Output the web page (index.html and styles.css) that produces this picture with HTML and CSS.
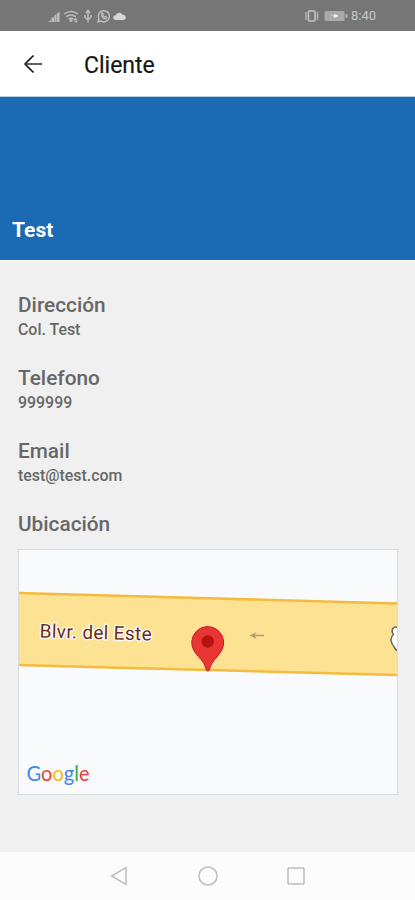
FILE: index.html
```html
<!DOCTYPE html>
<html lang="es">
<head>
<meta charset="utf-8">
<title>Cliente</title>
<link rel="stylesheet" href="styles.css">
</head>
<body>
<div class="screen">
  <div class="status">
    <svg class="status-icons" width="82" height="16" viewBox="0 0 82 16">
      <g fill="#bdbdbd">
        <path d="M1 14l3-2v2zM4.500 14v-4l2.500-1v5zM7.500 14V7.500l2-1.500v8zM10 14V5.500l2.500-2V14z"/>
        <path d="M77 12h-8.500a2.400 2.400 0 0 1 .2-4.800 3.900 3.900 0 0 1 7-.4 2.700 2.700 0 0 1 1.300 5.200z" fill="#d8d8d8"/>
        <circle cx="24" cy="12.500" r="1.600"/>
        <path d="M28.500 9.500l2.200 2.700h-4.400zM29 15l-2-2.200h4z"/>
      </g>
      <g fill="none" stroke="#bdbdbd" stroke-width="1.500">
        <path d="M17 6q7-5 14 0M19 8.700q5-3.400 10 0M21.500 11q2.500-1.600 5 0"/>
        <path d="M41 2.500v12M39 5l2-2.500L43 5M38 7v2.500l3 2.500 3-3V7"/>
        <path d="M51 14l.9-3.200a5.600 5.600 0 1 1 2.200 2.300z"/>
        <path d="M54.500 5.500c-.3 3 2 5.500 4.800 5.300l.6-1.500-1.700-.8-.8.7-1.700-1.800.6-.8-.7-1.500z" stroke-width="1.200"/>
      </g>
    </svg>
    <div class="status-right">
      <svg width="45" height="14" viewBox="0 0 45 14">
        <rect x="4.500" y="2" width="6.500" height="10" rx="1" fill="none" stroke="#c8c8c8" stroke-width="1.500"/>
        <path d="M2 3v8M13.500 3v8" stroke="#bababa" stroke-width="1.300"/>
        <rect x="20.500" y="2" width="20" height="10" rx="1.500" fill="#a9a9a9"/>
        <rect x="41.500" y="5" width="2" height="4" fill="#b0b0b0"/>
        <path d="M26 6.200l4 .2V4.800l5 2.200-5 2V7.600z" fill="#eee"/>
      </svg>
      <span class="clock">8:40</span>
    </div>
  </div>
  <header class="bar">
    <svg width="20" height="20" viewBox="0 0 20 20" fill="none" stroke="#161616" stroke-width="1.700">
      <path d="M10.500 1.500L2 10l8.500 8.500"/><path d="M2 10h17" stroke="#444"/>
    </svg>
    <h1>Cliente</h1>
  </header>
  <section class="hero"><h2>Test</h2></section>
  <main class="details">
    <div class="field"><h3>Dirección</h3><p>Col. Test</p></div>
    <div class="field"><h3>Telefono</h3><p>999999</p></div>
    <div class="field"><h3>Email</h3><p>test@test.com</p></div>
    <h3>Ubicación</h3>
    <div class="map">
      <svg width="378" height="244" viewBox="0 0 378 244">
        <path d="M0 43L90 45.500 180 48 378 53.500V125L190 120 90 117.500 0 115z" fill="#fde293"/>
        <g fill="none" stroke="#f5bb3e" stroke-width="2.600">
          <path d="M0 43L90 45.500 180 48 378 53.500"/>
          <path d="M0 115L90 117.500 190 120 378 125"/>
        </g>
        <text class="road" x="20.500" y="87.500" textLength="112" transform="rotate(1.500 20 88)">Blvr. del Este</text>
        <path d="M230.500 85.500l7-3.600-1.500 2.900h9v1.400h-9l1.500 2.900z" fill="#b39e72"/>
        <path d="M379 77.500c-5-2-7.500 3-4.500 7-4 3-2.500 9 .5 12 1 3 3 4 4 4" fill="#fff" stroke="#666" stroke-width="1.500"/>
        <path d="M188.800 121c-1.300 0-1.500-.8-2-3-2-7-6.500-9.500-11-16a16 16 0 1 1 26.500-1c-4 7-9.500 10-11.500 17-.5 2.200-.7 3-2 3z" fill="#ea3535" stroke="#c51f27"/>
        <circle cx="188.800" cy="91.500" r="6.200" fill="#b31412"/>
        <text class="google" x="7.500" y="231" textLength="63" lengthAdjust="spacingAndGlyphs"><tspan fill="#4285f4">G</tspan><tspan fill="#ea4335">o</tspan><tspan fill="#fbbc04">o</tspan><tspan fill="#4285f4">g</tspan><tspan fill="#34a853">l</tspan><tspan fill="#ea4335">e</tspan></text>
      </svg>
    </div>
  </main>
  <nav class="nav">
    <svg width="18" height="20" viewBox="0 0 18 20"><path d="M16 1.500v17L1.500 10z"/></svg>
    <svg width="20" height="20" viewBox="0 0 20 20"><circle cx="10" cy="10" r="9"/></svg>
    <svg width="18" height="18" viewBox="0 0 18 18"><rect x="1" y="1" width="16" height="16" rx="1"/></svg>
  </nav>
</div>
</body>
</html>
```
FILE: styles.css
```css
* { box-sizing: border-box; margin: 0; padding: 0; }
body { font-family: Roboto, "Liberation Sans", sans-serif; background: #f0f0f0; }
svg { display: block; flex: none; }
.screen { width: 415px; height: 900px; display: flex; flex-direction: column; overflow: hidden; }
.status { height: 31px; background: #767676; display: flex; justify-content: space-between; align-items: center; padding: 1px 39px 0 47px; }
.status-right { display: flex; align-items: center; gap: 2px; }
.clock { font-size: 13px; color: #c8c8c8; line-height: 16px; }
.bar { height: 66px; background: #fff; display: flex; align-items: center; gap: 41px; padding: 1px 0 0 23px; border-bottom: 1px solid #b8d2e6; }
.bar h1 { font-size: 23px; font-weight: 400; color: #161616; line-height: 28px; padding-top: 4px; -webkit-text-stroke: .2px #161616; }
.hero { height: 163px; background: #1b6ab4; display: flex; align-items: flex-end; padding: 0 12px 16px; }
.hero h2 { font-size: 21px; font-weight: 700; line-height: 28px; color: #fff; }
.details { flex: 1; padding: 31.500px 18px 0; color: #676767; border-top: 1px solid #fafafa; }
.details h3 { font-size: 20.800px; font-weight: 500; line-height: 24px; }
.details p { font-size: 15.900px; font-weight: 500; line-height: 20px; margin-top: 3px; }
.field { height: 73.200px; }
.map { margin-top: 13px; width: 380px; height: 246px; background: #f8fafc; border: 1px solid #d9dbdd; overflow: hidden; }
.road { font-size: 19px; font-weight: 400; fill: #6b2b22; stroke: #fff; stroke-width: 2.500px; stroke-linejoin: round; paint-order: stroke; }
.google { font-family: Lato, sans-serif; font-size: 21px; font-weight: 400; }
.nav { height: 48px; background: #fcfcfc; display: flex; justify-content: space-between; align-items: center; padding: 0 110px; }
.nav svg { fill: none; stroke: #bdbdbd; stroke-width: 1.500px; }
```
